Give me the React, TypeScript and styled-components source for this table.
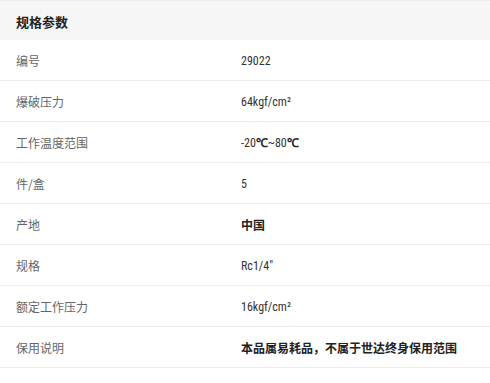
import React from "react";
import styled, { createGlobalStyle } from "styled-components";

const Global = createGlobalStyle`
  html, body { margin: 0; padding: 0; background: #fff; }
  body { font-family: "Noto Sans CJK SC", "Liberation Sans", sans-serif; }
`;

const Panel = styled.section`
  width: 490px;
  background: #fff;
`;

const Header = styled.div`
  height: 40px;
  box-sizing: border-box;
  border-top: 1px solid #ededed;
  background: #f6f6f6;
  display: flex;
  align-items: center;
  padding-left: 16px;
  padding-top: 1px;
  font-size: 13px;
  font-weight: 700;
  color: #222;
`;

const Row = styled.div`
  display: grid;
  grid-template-columns: 241px 1fr;
  height: 41px;
  box-sizing: border-box;
  border-bottom: 1px solid #ececec;
  align-items: center;
  padding-top: 1px;
`;

const Label = styled.div`
  padding-left: 16px;
  font-size: 12px;
  color: #666;
`;

const Value = styled.div<{ $bold?: boolean; $num?: boolean }>`
  font-size: 12px;
  color: ${(p) => (p.$num ? "#333" : "#222")};
  font-weight: ${(p) => (p.$bold ? 700 : 400)};
  font-family: ${(p) =>
    p.$num
      ? `"Liberation Sans Narrow", "Roboto Condensed", "DejaVu Sans Condensed", "Noto Sans CJK SC", sans-serif`
      : `"Noto Sans CJK SC", sans-serif`};
`;

const Deg = styled.span`
  font-family: "Liberation Sans", sans-serif;
  font-weight: 700;
  color: #222;
`;

const rows: { label: string; value: React.ReactNode; bold?: boolean; num?: boolean }[] = [
  { label: "编号", value: "29022", num: true },
  { label: "爆破压力", value: "64kgf/cm²", num: true },
  {
    label: "工作温度范围",
    value: (
      <>
        -20<Deg>℃</Deg>~80<Deg>℃</Deg>
      </>
    ),
    num: true,
  },
  { label: "件/盒", value: "5", num: true },
  { label: "产地", value: "中国", bold: true },
  { label: "规格", value: "Rc1/4\"", num: true },
  { label: "额定工作压力", value: "16kgf/cm²", num: true },
  { label: "保用说明", value: "本品属易耗品，不属于世达终身保用范围", bold: true },
];

export default function App() {
  return (
    <Panel>
      <Global />
      <Header>规格参数</Header>
      {rows.map((r) => (
        <Row key={r.label}>
          <Label>{r.label}</Label>
          <Value $bold={r.bold} $num={r.num}>
            {r.value}
          </Value>
        </Row>
      ))}
    </Panel>
  );
}
